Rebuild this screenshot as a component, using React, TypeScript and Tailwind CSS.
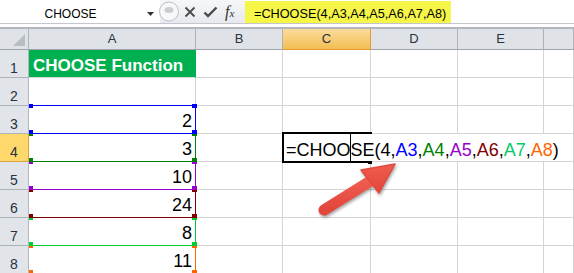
import type { ReactNode } from 'react';

const cx = (...parts: (string | false | null | undefined)[]) => parts.filter(Boolean).join(' ');

const COLUMNS = ['A', 'B', 'C', 'D', 'E', ''];

const RANGES = [
  { row: 3, value: '2', fill: 'bg-[#0000ff]', z: 'z-[16]' },
  { row: 4, value: '3', fill: 'bg-[#008000]', z: 'z-[15]' },
  { row: 5, value: '10', fill: 'bg-[#9900cc]', z: 'z-[14]' },
  { row: 6, value: '24', fill: 'bg-[#800000]', z: 'z-[13]' },
  { row: 7, value: '8', fill: 'bg-[#00cc33]', z: 'z-[12]' },
  { row: 8, value: '11', fill: 'bg-[#ff6600]', z: 'z-[11]' },
];

const FORMULA_PARTS: { text: string; color: string }[] = [
  { text: 'SE(4,', color: 'text-black' },
  { text: 'A3', color: 'text-[#0000ff]' },
  { text: ',', color: 'text-black' },
  { text: 'A4', color: 'text-[#008000]' },
  { text: ',', color: 'text-black' },
  { text: 'A5', color: 'text-[#9900cc]' },
  { text: ',', color: 'text-black' },
  { text: 'A6', color: 'text-[#800000]' },
  { text: ',', color: 'text-black' },
  { text: 'A7', color: 'text-[#00cc66]' },
  { text: ',', color: 'text-black' },
  { text: 'A8', color: 'text-[#ff6600]' },
  { text: ')', color: 'text-black' },
];

function FormulaBar() {
  return (
    <div className="flex h-[24px] shrink-0 border-b border-[#c3c7cd] bg-white">
      <div className="flex w-[160px] shrink-0 items-start">
        <div className="w-[141px] pt-[6px] text-center text-[12px] leading-[16px] text-black">CHOOSE</div>
        <svg width="8" height="5" viewBox="0 0 8 5" className="ml-[6px] mt-[12px]">
          <path d="M0 0H7L3.5 4Z" fill="#333" />
        </svg>
      </div>
      <div className="flex w-[85px] shrink-0 items-center bg-gradient-to-b from-[#f6f7f9] to-[#e6e9ed]">
        <svg width="20" height="23" viewBox="0 0 20 23" className="-ml-px">
          <circle cx="10" cy="11.5" r="9.5" fill="#f7f8fa" stroke="#b9bec5" />
          <ellipse cx="10" cy="10" rx="4.5" ry="3" fill="#c9cdd3" />
        </svg>
        <svg width="12" height="12" viewBox="0 0 12 12" className="ml-[5px]">
          <path d="M1.5 1.5L10.5 10.5M10.5 1.5L1.5 10.5" stroke="#4a4a4a" strokeWidth="1.8" />
        </svg>
        <svg width="15" height="12" viewBox="0 0 15 12" className="ml-[7px]">
          <path d="M1.5 6.5L5 10L13.5 1.5" stroke="#4a4a4a" strokeWidth="2.4" fill="none" />
        </svg>
        <span className="ml-[7px] font-['Liberation_Serif',serif] text-[16px] italic leading-none text-[#333]">
          f<span className="text-[11px]">x</span>
        </span>
      </div>
      <div className="flex-1">
        <div className="mt-px inline-block h-[22px] bg-[#f6f649] pl-[9px] pr-[5px] pt-[5px] text-[12.7px] leading-[16px] text-black">
          =CHOOSE(4,A3,A4,A5,A6,A7,A8)
        </div>
      </div>
    </div>
  );
}

function ColumnHeader({ label, selected }: { label: string; selected: boolean }) {
  return (
    <div
      className={cx(
        'flex items-center justify-center border-b border-r text-[13px] text-[#26323f]',
        selected
          ? 'border-b-[#e39a36] border-r-[#e39a36] bg-gradient-to-b from-[#fbdc98] to-[#f3bd52]'
          : 'border-b-[#9fa4aa] border-r-[#aeb2b8] bg-[#dfe3e8]',
      )}
    >
      {label}
    </div>
  );
}

function RowHeader({ n, selected }: { n: number; selected: boolean }) {
  return (
    <div
      className={cx(
        'flex items-end justify-center border-b border-r pb-px text-[14px] leading-[16px] text-[#26323f]',
        selected
          ? 'border-b-[#dba543] border-r-[#dba543] bg-[#fed86b]'
          : 'border-b-[#aeb3b9] border-r-[#b4b8be] bg-[#e1e4e8]',
      )}
    >
      {n}
    </div>
  );
}

function GridCell({ className, children }: { className?: string; children?: ReactNode }) {
  return <div className={cx('relative border-b border-r border-[#d4d4d4]', className)}>{children}</div>;
}

function RangeCell({ range, first }: { range: (typeof RANGES)[number]; first: boolean }) {
  return (
    <GridCell className="flex items-end justify-end pb-[2px] pr-[3px]">
      <span className="text-[18px] leading-[20px] text-black">{range.value}</span>
      {/* range outline: right and bottom edges, top edge only for the first cell */}
      {first ? <div className={cx('absolute -right-px -top-px left-0 h-px', range.fill, range.z)} /> : null}
      <div className={cx('absolute -bottom-px -right-px -top-px w-px', range.fill, range.z)} />
      <div className={cx('absolute -bottom-px -right-px left-0 h-px', range.fill, range.z)} />
      <div className={cx('absolute -top-[2px] left-0 h-[4px] w-[4px]', range.fill, range.z)} />
      <div className={cx('absolute -right-[2px] -top-[2px] h-[4px] w-[5px]', range.fill, range.z)} />
      <div className={cx('absolute -bottom-px left-0 h-[4px] w-[4px]', range.fill, range.z)} />
      <div className={cx('absolute -bottom-px -right-[2px] h-[4px] w-[5px]', range.fill, range.z)} />
    </GridCell>
  );
}

function EditingCell() {
  return (
    <GridCell>
      <div className="pointer-events-none absolute -bottom-[2px] -left-px -top-[2px] z-[21] w-[90px] border-2 border-r-0 border-black" />
      <div className="absolute bottom-0 left-px top-0 z-20 flex items-end whitespace-nowrap bg-white pb-px pl-[2px] pr-[3px] text-[18px] leading-[20px] text-black">
        <span>=CHOO</span>
        <span className="-mb-[2px] -ml-px -mt-px w-px self-stretch bg-black" />
        {FORMULA_PARTS.map((part, i) => (
          <span key={i} className={part.color}>
            {part.text}
          </span>
        ))}
      </div>
      <div className="absolute left-[85px] top-[27px] z-[22] h-[3px] w-[4px] bg-black" />
    </GridCell>
  );
}

function Arrow() {
  return (
    <svg
      width="574"
      height="273"
      viewBox="0 0 574 273"
      className="pointer-events-none absolute left-0 top-0 z-30 drop-shadow-[1px_2px_1.5px_rgba(0,0,0,0.35)]"
    >
      <defs>
        <linearGradient id="arrowFill" x1="0" y1="0" x2="0" y2="1">
          <stop offset="0" stopColor="#ef5d50" />
          <stop offset="1" stopColor="#e2463b" />
        </linearGradient>
      </defs>
      <line x1="324" y1="210" x2="372" y2="180" stroke="url(#arrowFill)" strokeWidth="11" strokeLinecap="round" />
      <path d="M395 164L361 170L379 193Z" fill="url(#arrowFill)" stroke="#e4493e" strokeWidth="1.5" strokeLinejoin="round" />
    </svg>
  );
}

export default function App() {
  return (
    <div className="relative flex h-[273px] w-[574px] flex-col overflow-hidden bg-white font-['Liberation_Sans',Arial,sans-serif]">
      <FormulaBar />
      <div className="h-[3px] shrink-0 bg-white" />
      <div className="h-[2px] shrink-0 bg-[#b3b7bd]" />
      <div className="grid flex-1 grid-cols-[29px_167px_87px_88px_87px_86px_1fr] grid-rows-[21px_repeat(8,28px)]">
        <div className="relative border-b border-r border-b-[#9fa4aa] border-r-[#aeb2b8] bg-[#dfe3e8]">
          <svg width="12" height="12" viewBox="0 0 12 12" className="absolute bottom-[3px] right-[3px]">
            <path d="M12 0V12H0Z" fill="#b9bec4" />
          </svg>
        </div>
        {COLUMNS.map((col) => (
          <ColumnHeader key={col || 'F'} label={col} selected={col === 'C'} />
        ))}

        {Array.from({ length: 8 }, (_, i) => i + 1).map((row) => {
          const range = RANGES.find((r) => r.row === row);
          return [
            <RowHeader key={`h${row}`} n={row} selected={row === 4} />,
            row === 1 ? (
              <div
                key={`a${row}`}
                className="flex items-end border-b border-r border-b-[#d4d4d4] border-r-[#00b050] bg-[#00b050] pb-px pl-[4px] text-[17px] font-bold leading-[20px] text-white"
              >
                CHOOSE Function
              </div>
            ) : range ? (
              <RangeCell key={`a${row}`} range={range} first={row === 3} />
            ) : (
              <GridCell key={`a${row}`} />
            ),
            <GridCell key={`b${row}`} />,
            row === 4 ? <EditingCell key={`c${row}`} /> : <GridCell key={`c${row}`} />,
            <GridCell key={`d${row}`} />,
            <GridCell key={`e${row}`} />,
            <GridCell key={`f${row}`} />,
          ];
        })}
      </div>
      <Arrow />
    </div>
  );
}
